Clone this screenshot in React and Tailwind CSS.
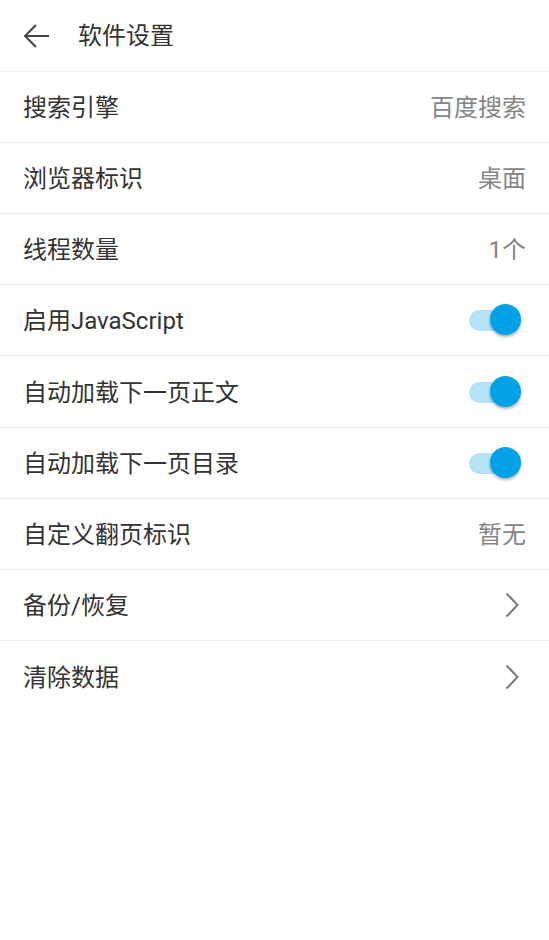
import React from "react";

const font = { fontFamily: 'Roboto, "Noto Sans CJK SC", sans-serif' };

function Toggle() {
  return (
    <div className="relative h-[32px] w-[52px]">
      <div className="absolute left-0 top-[6px] h-[21px] w-[47px] rounded-full bg-[#b6e2f7]" />
      <div className="absolute right-0 top-0 h-[31px] w-[31px] rounded-full bg-[#03a1e5] shadow-[0_2px_3px_rgba(0,0,0,0.3)]" />
    </div>
  );
}

function Chevron() {
  return (
    <svg width="14" height="26" viewBox="0 0 14 26" fill="none">
      <path d="M1.5 1.5 L12.5 13 L1.5 24.5" stroke="#7a7a7a" strokeWidth="2" />
    </svg>
  );
}

function Row({ label, value, toggle, chevron, border, h = "h-[71px]" }) {
  return (
    <div className={`flex ${h} items-center justify-between pl-[23px] pr-[23px] ${border ? "border-b border-[#ebebeb]" : ""}`}>
      <span className="mt-[2px] text-[24px] leading-none text-[#333333]">{label}</span>
      {value && <span className="mt-[2px] text-[24px] leading-none text-[#858585]">{value}</span>}
      {toggle && <div className="mr-[5px]"><Toggle /></div>}
      {chevron && <div className="mr-[7px] flex items-center"><Chevron /></div>}
    </div>
  );
}

export default function App() {
  return (
    <div className="min-h-[940px] w-[549px] bg-white" style={font}>
      <div className="flex h-[72px] items-center border-b border-[#f0f0f0]">
        <div className="ml-[23px] flex h-[26px] w-[27px] items-center">
          <svg width="27" height="26" viewBox="0 0 27 26" fill="none">
            <path d="M26 13 H3" stroke="#444" strokeWidth="2" />
            <path d="M13 2 L2 13 L13 24" stroke="#444" strokeWidth="2" />
          </svg>
        </div>
        <span className="ml-[28px] mt-[1px] text-[24px] leading-none text-[#333333]">软件设置</span>
      </div>
      <Row label="搜索引擎" value="百度搜索" border />
      <Row label="浏览器标识" value="桌面" border />
      <Row label="线程数量" value="1个" border />
      <Row label="启用JavaScript" toggle border />
      <Row label="自动加载下一页正文" toggle border h="h-[72px]" />
      <Row label="自动加载下一页目录" toggle border />
      <Row label="自定义翻页标识" value="暂无" border />
      <Row label="备份/恢复" chevron border />
      <Row label="清除数据" chevron />
    </div>
  );
}
